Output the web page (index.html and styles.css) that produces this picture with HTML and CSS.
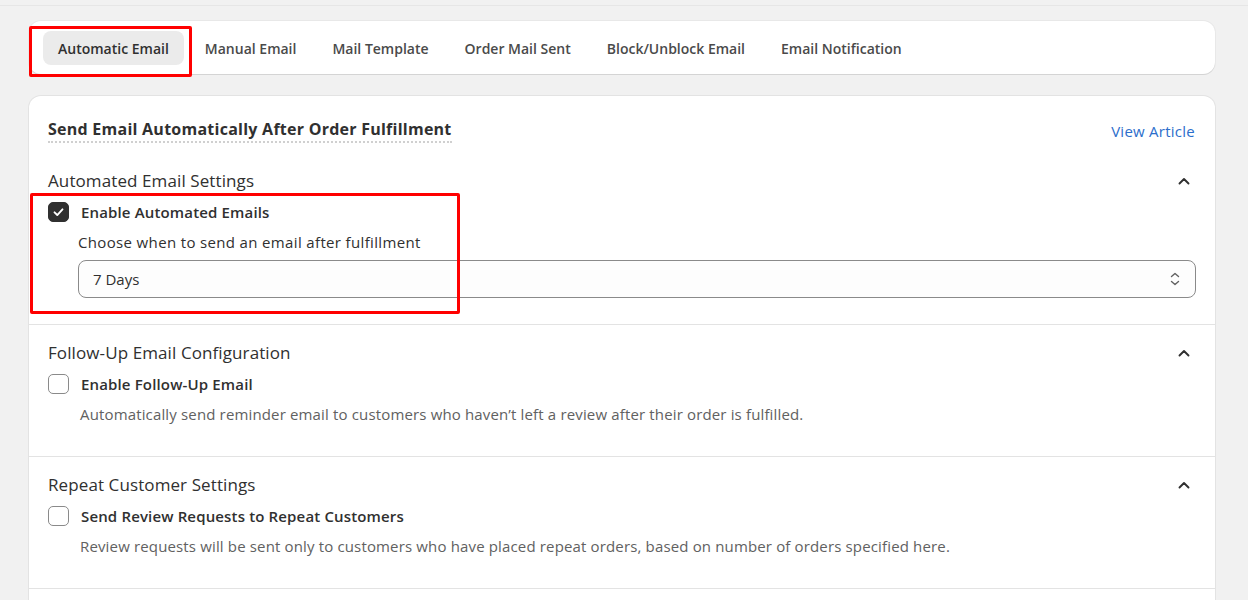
FILE: index.html
```html
<!DOCTYPE html>
<html>
<head>
<meta charset="utf-8">
<link rel="stylesheet" href="styles.css">
</head>
<body>
<div class="topline"></div>
<div class="page">
  <div class="tabcard">
    <nav class="tabs">
      <span class="tab active">Automatic Email</span>
      <span class="tab">Manual Email</span>
      <span class="tab">Mail Template</span>
      <span class="tab">Order Mail Sent</span>
      <span class="tab">Block/Unblock Email</span>
      <span class="tab">Email Notification</span>
    </nav>
    <div class="mark mark-tab"></div>
  </div>

  <div class="card">
    <div class="card-head">
      <h1 class="title">Send Email Automatically After Order Fulfillment</h1>
      <a class="link">View Article</a>
    </div>

    <section class="sec sec-first">
      <div class="sec-head">
        <h2>Automated Email Settings</h2>
        <svg class="chev" width="20" height="20" viewBox="0 0 20 20"><path d="M5.5 12.5l4.5-4.5 4.5 4.5" fill="none" stroke="#303030" stroke-width="1.9" stroke-linecap="round" stroke-linejoin="round"/></svg>
      </div>
      <div class="marked">
        <label class="check">
          <span class="box checked"><svg width="20" height="20" viewBox="0 0 20 20"><path d="M5.8 10.4l2.9 2.8 5.5-6" fill="none" stroke="#fff" stroke-width="2" stroke-linecap="round" stroke-linejoin="round"/></svg></span>
          <span class="check-label">Enable Automated Emails</span>
        </label>
        <div class="field">
          <div class="field-label">Choose when to send an email after fulfillment</div>
          <div class="select">
            <span>7 Days</span>
            <svg width="16" height="20" viewBox="0 0 16 20"><path d="M4.5 7.5L8 4.5l3.5 3M4.5 12.5L8 15.5l3.5-3" fill="none" stroke="#616161" stroke-width="1.4" stroke-linecap="round" stroke-linejoin="round"/></svg>
          </div>
        </div>
        <div class="mark mark-sec"></div>
      </div>
    </section>

    <section class="sec">
      <div class="sec-head">
        <h2>Follow-Up Email Configuration</h2>
        <svg class="chev" width="20" height="20" viewBox="0 0 20 20"><path d="M5.5 12.5l4.5-4.5 4.5 4.5" fill="none" stroke="#303030" stroke-width="1.9" stroke-linecap="round" stroke-linejoin="round"/></svg>
      </div>
      <label class="check">
        <span class="box"></span>
        <span class="check-label">Enable Follow-Up Email</span>
      </label>
      <p class="help">Automatically send reminder email to customers who haven’t left a review after their order is fulfilled.</p>
    </section>

    <section class="sec">
      <div class="sec-head">
        <h2>Repeat Customer Settings</h2>
        <svg class="chev" width="20" height="20" viewBox="0 0 20 20"><path d="M5.5 12.5l4.5-4.5 4.5 4.5" fill="none" stroke="#303030" stroke-width="1.9" stroke-linecap="round" stroke-linejoin="round"/></svg>
      </div>
      <label class="check">
        <span class="box"></span>
        <span class="check-label">Send Review Requests to Repeat Customers</span>
      </label>
      <p class="help">Review requests will be sent only to customers who have placed repeat orders, based on number of orders specified here.</p>
    </section>
  </div>
</div>
</body>
</html>
```
FILE: styles.css
```css
* { box-sizing: border-box; }
html, body { margin: 0; padding: 0; }
body {
  background: #f1f1f1;
  font-family: "Open Sans", "Noto Sans", sans-serif;
  color: #303030;
  font-size: 15px;
  overflow: hidden;
  height: 600px;
}
.topline {
  height: 6px;
  border-bottom: 1px solid #e6e6e6;
}
.page {
  padding: 15px 33px 0 29px;
}
.tabcard {
  position: relative;
  background: #fff;
  border-radius: 12px;
  box-shadow: 0 1px 0 #d4d4d4, 0 0 0 1px #e8e8e8;
  height: 53px;
  display: flex;
  align-items: center;
  padding: 1px 14px 0;
}
.tabs { display: flex; align-items: center; gap: 6px; }
.tab {
  padding: 1px 15px 0;
  height: 34px;
  line-height: 33px;
  border-radius: 8px;
  font-size: 14px;
  font-weight: 600;
  color: #4a4a4a;
  white-space: nowrap;
}
.tab.active { background: #ebebeb; color: #303030; }
.mark { position: absolute; border: 3px solid #ff0000; border-radius: 2px; pointer-events: none; }
.mark-tab { left: 0; top: 5px; width: 163px; height: 51px; }

.card {
  margin-top: 22px;
  background: #fff;
  border-radius: 12px 12px 0 0;
  box-shadow: 0 0 0 1px #e3e3e3;
  height: 504px;
  overflow: hidden;
}
.card-head {
  display: flex;
  justify-content: space-between;
  align-items: center;
  padding: 22px 20px 0 19px;
}
.title {
  margin: 0;
  font-size: 16px;
  font-weight: 700;
  letter-spacing: 0.25px;
  border-bottom: 2px dotted #d0d0d0;
  line-height: 22px;
  padding-bottom: 1px;
}
.link {
  color: #2c6ecb;
  font-size: 15px;
  letter-spacing: 0.25px;
  line-height: 20px;
}
.sec {
  padding: 16px 19px 31px 19px;
  border-bottom: 1px solid #e3e3e3;
}
.sec-first { padding-top: 26px; padding-bottom: 26px; }
.sec-head {
  display: flex;
  justify-content: space-between;
  align-items: center;
  height: 24px;
}
.sec-head h2 {
  margin: 0;
  font-size: 17px;
  font-weight: 400;
  letter-spacing: 0.1px;
  line-height: 24px;
  color: #303030;
}
.chev { margin-right: 2px; }
.marked { position: relative; }
.check {
  display: flex;
  align-items: center;
  gap: 12px;
  margin-top: 9px;
  height: 20px;
}
.box {
  width: 21px; height: 20px;
  border: 1px solid #8a8a8a;
  border-radius: 5px;
  background: #fff;
  display: flex; align-items: center; justify-content: center;
  flex: none;
}
.box.checked { background: #303030; border-color: #303030; }
.check-label { font-size: 15px; font-weight: 600; letter-spacing: 0.15px; color: #303030; line-height: 20px; }
.field { padding-left: 30px; margin-top: 9px; }
.field-label { font-size: 15px; font-weight: 500; letter-spacing: 0.35px; line-height: 22px; }
.select {
  margin-top: 7px;
  height: 38px;
  border: 1px solid #8a8a8a;
  border-radius: 8px;
  background: #fdfdfd;
  display: flex;
  align-items: center;
  justify-content: space-between;
  padding: 0 12px 0 14px;
  font-size: 15px;
}
.help {
  margin: 9px 0 0 32px;
  font-size: 15px;
  letter-spacing: 0.15px;
  color: #616161;
  line-height: 22px;
}
.mark-sec { left: -18px; top: -9px; width: 430px; height: 121px; }
```
